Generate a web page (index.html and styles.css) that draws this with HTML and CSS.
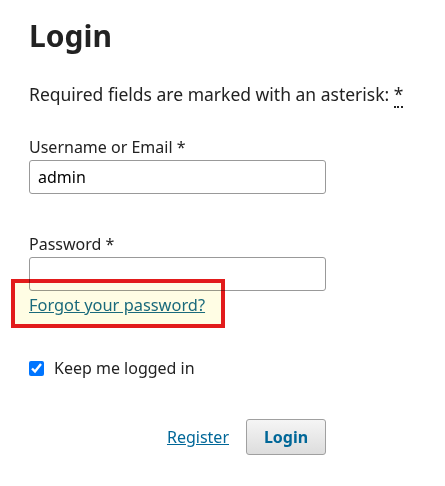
FILE: index.html
```html
<!DOCTYPE html>
<html>
<head>
<meta charset="utf-8">
<link rel="stylesheet" href="styles.css">
</head>
<body>
<main class="page">
  <h1 class="title">Login</h1>
  <p class="required">Required fields are marked with an asterisk: <abbr class="req" title="required">*</abbr></p>
  <form class="form">
    <div class="field">
      <label class="label">Username or Email *</label>
      <input class="input" type="text" value="admin">
    </div>
    <div class="field field-pw">
      <label class="label">Password *</label>
      <input class="input" type="password" value="">
      <div class="forgot-wrap">
        <a class="forgot" href="#">Forgot your password?</a>
        <span class="highlight"></span>
      </div>
    </div>
    <div class="remember">
      <input class="check" type="checkbox" checked>
      <span class="remember-text">Keep me logged in</span>
    </div>
    <div class="buttons">
      <a class="register" href="#">Register</a>
      <button class="submit" type="button">Login</button>
    </div>
  </form>
</main>
</body>
</html>
```
FILE: styles.css
```css
html, body {
  margin: 0;
  padding: 0;
  background: #fff;
}
body {
  font-family: "Noto Sans", "Open Sans", sans-serif;
  color: rgba(0,0,0,0.87);
  font-size: 16px;
}
.page {
  padding: 14px 0 0 29px;
  width: 297px;
}
.title {
  font-size: 30px;
  font-weight: 700;
  line-height: 44px;
  margin: 0;
  color: #222;
}
.required {
  margin: 24px 0 0;
  font-size: 17.5px;
  line-height: 24px;
  color: #222;
  white-space: nowrap;
}
.req {
  text-decoration: none;
  border-bottom: 2px dotted #222;
}
.form {
  margin-top: 29px;
}
.field {
  display: flex;
  flex-direction: column;
}
.label {
  line-height: 24px;
  color: #222;
}
.input {
  box-sizing: border-box;
  height: 34px;
  width: 297px;
  margin: 1px 0 0;
  border: 1px solid #999;
  border-radius: 3px;
  padding: 0 8px;
  font: inherit;
  color: #000;
}
.field-pw {
  margin-top: 38px;
}
.forgot-wrap {
  position: relative;
  margin-top: 2px;
}
.forgot {
  font-size: 16.4px;
  line-height: 24px;
  color: #1a6b8a;
  text-decoration: underline;
}
.highlight {
  position: absolute;
  left: -18px;
  top: -14px;
  width: 214px;
  height: 49px;
  box-sizing: border-box;
  border: 4px solid #e21b1b;
  background: #fffde4;
  mix-blend-mode: multiply;
}
.remember {
  display: flex;
  align-items: center;
  margin-top: 39px;
  gap: 10px;
}
.check {
  margin: 0;
  width: 15px;
  height: 15px;
}
.remember-text {
  line-height: 24px;
  color: #222;
}
.buttons {
  display: flex;
  justify-content: flex-end;
  align-items: center;
  gap: 17px;
  margin-top: 39px;
}
.register {
  color: #006798;
  text-decoration: underline;
}
.submit {
  box-sizing: border-box;
  height: 36px;
  width: 80px;
  border: 1px solid #a0a0a0;
  border-radius: 3px;
  background: linear-gradient(#f5f5f5, #dddddd);
  color: #006798;
  font: 700 16px "Noto Sans", sans-serif;
  padding: 0;
}
```
